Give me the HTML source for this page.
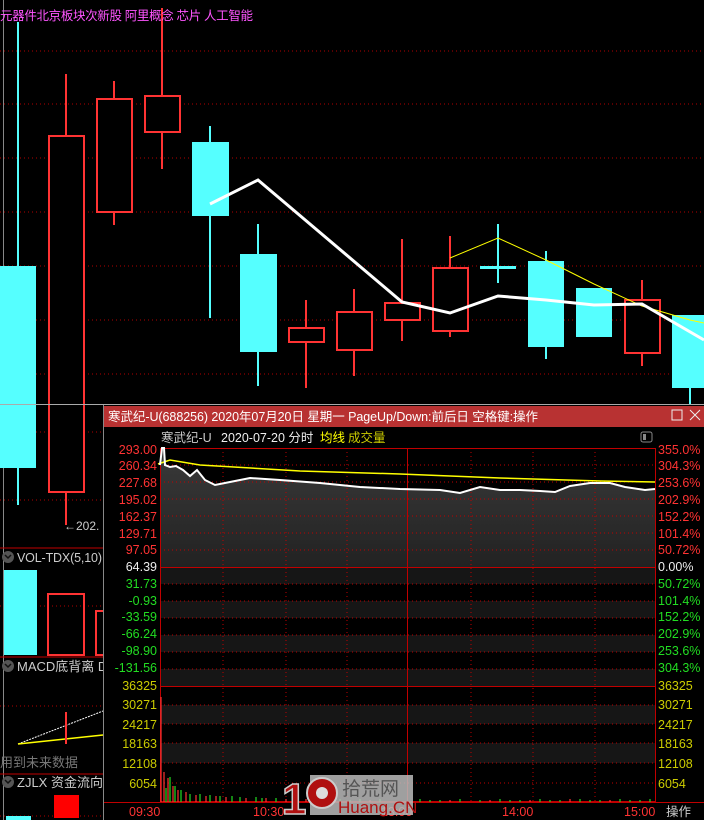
<!DOCTYPE html>
<html><head><meta charset="utf-8"><style>
html,body{margin:0;padding:0;background:#000;width:704px;height:820px;overflow:hidden}
svg{display:block}
text{font-family:"Liberation Sans","Noto Sans CJK SC",sans-serif}
</style></head><body>
<svg width="704" height="820" viewBox="0 0 704 820" xmlns="http://www.w3.org/2000/svg">
<rect width="704" height="820" fill="#000"/>
<g stroke="#b00000" stroke-width="1" stroke-dasharray="1,3">
<line x1="0" y1="51" x2="704" y2="51"/><line x1="0" y1="104" x2="704" y2="104"/>
<line x1="0" y1="158" x2="704" y2="158"/><line x1="0" y1="212" x2="704" y2="212"/>
<line x1="0" y1="266" x2="704" y2="266"/><line x1="0" y1="320" x2="704" y2="320"/>
<line x1="0" y1="374" x2="704" y2="374"/><line x1="0" y1="432" x2="103" y2="432"/>
<line x1="0" y1="500" x2="103" y2="500"/><line x1="0" y1="606" x2="103" y2="606"/>
<line x1="0" y1="706" x2="103" y2="706"/><line x1="0" y1="816" x2="103" y2="816"/>
</g>
<line x1="3.5" y1="0" x2="3.5" y2="820" stroke="#888"/>
<g stroke-width="2">
<line x1="18" y1="22" x2="18" y2="505" stroke="#55ffff"/>
<rect x="0" y="266" width="36" height="202" fill="#55ffff"/>
<line x1="66" y1="74" x2="66" y2="525" stroke="#ff3333"/>
<rect x="49" y="136" width="35" height="356" fill="#000" stroke="#ff3333"/>
<line x1="114" y1="81" x2="114" y2="225" stroke="#ff3333"/>
<rect x="97" y="99" width="35" height="113" fill="#000" stroke="#ff3333"/>
<line x1="162" y1="8" x2="162" y2="169" stroke="#ff3333"/>
<rect x="145" y="96" width="35" height="36" fill="#000" stroke="#ff3333"/>
<line x1="210" y1="126" x2="210" y2="318" stroke="#55ffff"/>
<rect x="192" y="142" width="37" height="74" fill="#55ffff"/>
<line x1="258" y1="224" x2="258" y2="386" stroke="#55ffff"/>
<rect x="240" y="254" width="37" height="98" fill="#55ffff"/>
<line x1="306" y1="300" x2="306" y2="388" stroke="#ff3333"/>
<rect x="289" y="328" width="35" height="14" fill="#000" stroke="#ff3333"/>
<line x1="354" y1="289" x2="354" y2="376" stroke="#ff3333"/>
<rect x="337" y="312" width="35" height="38" fill="#000" stroke="#ff3333"/>
<line x1="402" y1="239" x2="402" y2="341" stroke="#ff3333"/>
<rect x="385" y="303" width="35" height="17" fill="#000" stroke="#ff3333"/>
<line x1="450" y1="236" x2="450" y2="337" stroke="#ff3333"/>
<rect x="433" y="268" width="35" height="63" fill="#000" stroke="#ff3333"/>
<line x1="498" y1="224" x2="498" y2="283" stroke="#55ffff"/>
<rect x="480" y="266" width="36" height="3" fill="#55ffff" stroke="none"/>
<line x1="546" y1="251" x2="546" y2="359" stroke="#55ffff"/>
<rect x="528" y="261" width="36" height="86" fill="#55ffff"/>
<rect x="576" y="288" width="36" height="49" fill="#55ffff"/>
<line x1="642" y1="280" x2="642" y2="366" stroke="#ff3333"/>
<rect x="625" y="300" width="35" height="53" fill="#000" stroke="#ff3333"/>
<line x1="690" y1="380" x2="690" y2="405" stroke="#55ffff"/>
<rect x="672" y="315" width="32" height="73" fill="#55ffff"/>
</g>
<polyline points="450,258 498,238 546,260 594,284 642,306 690,320 704,323" fill="none" stroke="#ffff00" stroke-width="1"/>
<polyline points="210,204 258,180 402,302 450,313 498,296 546,300 594,305 642,304 704,340" fill="none" stroke="#fff" stroke-width="3"/>
<text x="0" y="20" font-size="12.5" fill="#ff55ff" textLength="253">元器件北京板块次新股 阿里概念 芯片 人工智能</text>
<line x1="0" y1="404.5" x2="704" y2="404.5" stroke="#aaa"/>
<text x="64" y="530" font-size="12" fill="#ccc">←202.</text>
<line x1="0" y1="548" x2="103" y2="548" stroke="#c00000"/>
<circle cx="8" cy="557" r="6" fill="#555"/><path d="M5,555 l3,3 l3,-3" stroke="#111" fill="none" stroke-width="1.5"/>
<text x="17" y="562" font-size="12.5" fill="#ccc" textLength="85">VOL-TDX(5,10)</text>
<rect x="4" y="570" width="33" height="85" fill="#55ffff"/>
<rect x="48" y="594" width="36" height="61" fill="none" stroke="#ff3333" stroke-width="2"/>
<rect x="96" y="611" width="10" height="44" fill="none" stroke="#ff3333" stroke-width="2"/>
<line x1="0" y1="657" x2="103" y2="657" stroke="#c00000"/>
<circle cx="8" cy="666" r="6" fill="#555"/><path d="M5,664 l3,3 l3,-3" stroke="#111" fill="none" stroke-width="1.5"/>
<text x="17" y="671" font-size="13" fill="#ccc">MACD底背离 D</text>
<line x1="18" y1="744" x2="103" y2="711" stroke="#fff" stroke-dasharray="2,1"/>
<line x1="18" y1="744" x2="103" y2="735" stroke="#ffff00" stroke-width="1.5"/>
<line x1="66" y1="712" x2="66" y2="744" stroke="#ff3333" stroke-width="2"/>
<text x="0" y="767" font-size="13" fill="#777">用到未来数据</text>
<line x1="0" y1="774" x2="103" y2="774" stroke="#c00000"/>
<circle cx="8" cy="782" r="6" fill="#555"/><path d="M5,780 l3,3 l3,-3" stroke="#111" fill="none" stroke-width="1.5"/>
<text x="17" y="787" font-size="13" fill="#ccc">ZJLX 资金流向:</text>
<rect x="54" y="795" width="25" height="23" fill="#ff0000"/>
<rect x="6" y="816" width="25" height="4" fill="#55ffff"/>
<rect x="103" y="405" width="601" height="415" fill="#000"/>
<line x1="103.5" y1="405" x2="103.5" y2="820" stroke="#888"/>
<rect x="104" y="406" width="600" height="21" fill="#b83232"/>
<text x="108" y="421" font-size="12.5" fill="#fff" textLength="430">寒武纪-U(688256) 2020年07月20日 星期一 PageUp/Down:前后日 空格键:操作</text>
<rect x="672" y="410" width="10" height="10" fill="none" stroke="#eee"/>
<path d="M690,410 l10,10 M700,410 l-10,10" stroke="#eee"/>
<text x="161" y="442" font-size="12.5" fill="#ccc">寒武纪-U</text>
<text x="221" y="442" font-size="12.5" fill="#eee">2020-07-20 分时</text>
<text x="320" y="442" font-size="12.5" fill="#ffff00">均线</text>
<text x="348" y="442" font-size="12.5" fill="#cccc00">成交量</text>
<rect x="641" y="432" width="11" height="10" rx="2" fill="none" stroke="#888"/><rect x="643" y="434" width="3" height="6" fill="#888"/>
<defs><linearGradient id="g" x1="0" y1="0" x2="0" y2="1"><stop offset="0" stop-color="#3a3a3a"/><stop offset="1" stop-color="#222"/></linearGradient></defs>
<rect x="160" y="567" width="495" height="17" fill="#161616"/>
<rect x="160" y="601" width="495" height="17" fill="#161616"/>
<rect x="160" y="635" width="495" height="17" fill="#161616"/>
<rect x="160" y="669" width="495" height="17" fill="#161616"/>
<rect x="160" y="705" width="495" height="19" fill="#161616"/>
<rect x="160" y="743" width="495" height="20" fill="#161616"/>
<polygon points="160,465 162,448 164,448 165,465 170,467 176,466 183,470 190,476 197,470 205,480 215,485 230,482 250,478 280,480 320,483 360,487 400,489 440,490 460,493 480,487 500,490 520,490 540,491 555,492 570,486 590,483 610,483 625,487 645,490 655,489 655,567 160,567" fill="url(#g)"/>
<g stroke="#c00000" stroke-dasharray="1,3">
<line x1="160" y1="465" x2="655" y2="465"/><line x1="160" y1="482" x2="655" y2="482"/><line x1="160" y1="499" x2="655" y2="499"/>
<line x1="160" y1="516" x2="655" y2="516"/><line x1="160" y1="533" x2="655" y2="533"/><line x1="160" y1="550" x2="655" y2="550"/>
<line x1="160" y1="584" x2="655" y2="584"/><line x1="160" y1="601" x2="655" y2="601"/><line x1="160" y1="618" x2="655" y2="618"/>
<line x1="160" y1="635" x2="655" y2="635"/><line x1="160" y1="652" x2="655" y2="652"/><line x1="160" y1="669" x2="655" y2="669"/>
<line x1="160" y1="705" x2="655" y2="705"/><line x1="160" y1="724" x2="655" y2="724"/><line x1="160" y1="743" x2="655" y2="743"/>
<line x1="160" y1="763" x2="655" y2="763"/><line x1="160" y1="783" x2="655" y2="783"/>
<line x1="223" y1="448" x2="223" y2="802"/><line x1="286" y1="448" x2="286" y2="802"/><line x1="347" y1="448" x2="347" y2="802"/>
<line x1="471" y1="448" x2="471" y2="802"/><line x1="533" y1="448" x2="533" y2="802"/><line x1="595" y1="448" x2="595" y2="802"/>
</g>
<g stroke="#c00000" fill="none">
<rect x="160.5" y="448.5" width="495" height="353"/>
<line x1="160" y1="567.5" x2="655" y2="567.5"/><line x1="160" y1="686.5" x2="655" y2="686.5"/>
<line x1="407.5" y1="448" x2="407.5" y2="802"/>
<line x1="104" y1="802.5" x2="704" y2="802.5"/>
</g>
<polyline points="158,464 170,460 200,465 300,471 400,474 500,478 600,481 655,482" fill="none" stroke="#ffff00" stroke-width="1.5"/>
<polyline points="160,465 162,448 164,448 165,465 170,467 176,466 183,470 190,476 197,470 205,480 215,485 230,482 250,478 280,480 320,483 360,487 400,489 440,490 460,493 480,487 500,490 520,490 540,491 555,492 570,486 590,483 610,483 625,487 645,490 655,489" fill="none" stroke="#fff" stroke-width="2"/>
<g stroke-width="1.2">
<line x1="161" y1="697" x2="161" y2="802" stroke="#ff3333"/>
<path d="M164,772V802M168,778V802M173,786V802M178,790V802M186,792V802M196,795V802M206,796V802M216,796V802M226,797V802M246,798V802M266,798V802M286,799V802M306,799V802M330,799V802M370,800V802M450,800V802M490,800V802M530,800V802M570,799V802M610,800V802" stroke="#ff3333"/>
<path d="M166,788V802M170,777V802M175,786V802M181,790V802M190,794V802M200,794V802M210,795V802M220,796V802M232,796V802M240,797V802M256,797V802M262,798V802M276,798V802M296,798V802M313,799V802M320,799V802M340,799V802M350,800V802M360,799V802M380,799V802M420,799V802M430,800V802M440,800V802M460,799V802M480,800V802M500,799V802M510,800V802M520,800V802M540,799V802M550,800V802M560,800V802M580,799V802M590,800V802M600,800V802M620,799V802M630,800V802M640,800V802M650,799V802" stroke="#22dd22"/>
</g>
<g font-size="12.5" text-anchor="end">
<text x="157" y="454" fill="#ff3333">293.00</text><text x="157" y="470" fill="#ff3333">260.34</text>
<text x="157" y="487" fill="#ff3333">227.68</text><text x="157" y="504" fill="#ff3333">195.02</text>
<text x="157" y="521" fill="#ff3333">162.37</text><text x="157" y="538" fill="#ff3333">129.71</text>
<text x="157" y="554" fill="#ff3333">97.05</text><text x="157" y="571" fill="#eee">64.39</text>
<text x="157" y="588" fill="#22dd22">31.73</text><text x="157" y="605" fill="#22dd22">-0.93</text>
<text x="157" y="621" fill="#22dd22">-33.59</text><text x="157" y="638" fill="#22dd22">-66.24</text>
<text x="157" y="655" fill="#22dd22">-98.90</text><text x="157" y="672" fill="#22dd22">-131.56</text>
<g fill="#cccc00"><text x="157" y="690">36325</text><text x="157" y="709">30271</text><text x="157" y="729">24217</text><text x="157" y="748">18163</text><text x="157" y="768">12108</text><text x="157" y="788">6054</text></g>
</g>
<g font-size="12.5">
<text x="658" y="454" fill="#ff3333">355.0%</text><text x="658" y="470" fill="#ff3333">304.3%</text>
<text x="658" y="487" fill="#ff3333">253.6%</text><text x="658" y="504" fill="#ff3333">202.9%</text>
<text x="658" y="521" fill="#ff3333">152.2%</text><text x="658" y="538" fill="#ff3333">101.4%</text>
<text x="658" y="554" fill="#ff3333">50.72%</text><text x="658" y="571" fill="#eee">0.00%</text>
<text x="658" y="588" fill="#22dd22">50.72%</text><text x="658" y="605" fill="#22dd22">101.4%</text>
<text x="658" y="621" fill="#22dd22">152.2%</text><text x="658" y="638" fill="#22dd22">202.9%</text>
<text x="658" y="655" fill="#22dd22">253.6%</text><text x="658" y="672" fill="#22dd22">304.3%</text>
<g fill="#cccc00"><text x="658" y="690">36325</text><text x="658" y="709">30271</text><text x="658" y="729">24217</text><text x="658" y="748">18163</text><text x="658" y="768">12108</text><text x="658" y="788">6054</text></g>
<g fill="#ff3333"><text x="129" y="816">09:30</text><text x="253" y="816">10:30</text><text x="381" y="816">13:00</text><text x="502" y="816">14:00</text><text x="624" y="816">15:00</text></g>
<text x="666" y="816" fill="#ccc">操作</text>
</g>
<rect x="310" y="775" width="103" height="40" fill="#bbb" opacity="0.85"/>
<text x="282" y="814" font-size="44" font-weight="bold" fill="#b01010" stroke="#ccc" stroke-width="1.5">1</text>
<circle cx="322" cy="793" r="15" fill="#b01010" stroke="#ccc" stroke-width="2"/>
<circle cx="322" cy="793" r="6" fill="#ddd"/>
<text x="342" y="795" font-size="19" fill="#555">拾荒网</text>
<text x="338" y="813" font-size="17" fill="#b01010">Huang.CN</text>
</svg>
</body></html>
